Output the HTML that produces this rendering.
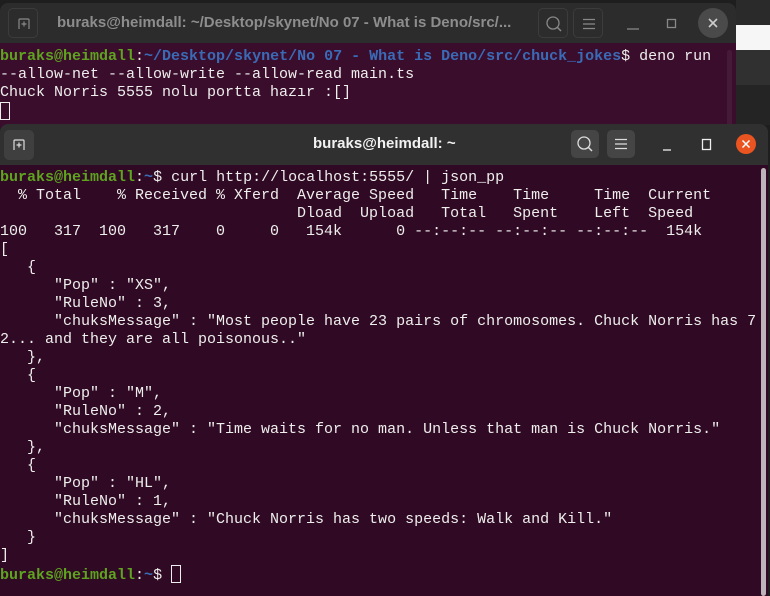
<!DOCTYPE html>
<html><head><meta charset="utf-8"><style>
*{margin:0;padding:0;box-sizing:border-box}
body{width:770px;height:596px;overflow:hidden;background:#1e1e1e;position:relative;font-family:"Liberation Sans",sans-serif}
.bg1{position:absolute;left:736px;top:0;width:34px;height:25px;background:#2a2a2a}
.bg2{position:absolute;left:736px;top:25px;width:34px;height:25px;background:#f6f6f6}
.bg3{position:absolute;left:736px;top:50px;width:34px;height:35px;background:#303030}
.bg4{position:absolute;left:736px;top:85px;width:34px;height:40px;background:#242424}
.win{position:absolute;overflow:hidden;border-radius:8px 8px 0 0}
.tb{position:absolute;left:0;right:0;top:0;height:40px}
.btn{position:absolute;top:5px;width:30px;height:30px;border-radius:5px}
.term{position:absolute;left:0;right:0;font-family:"Liberation Mono",monospace;font-size:15px;line-height:18px;white-space:pre;color:#eeeeec}
.g{color:#5ea41f;font-weight:bold}
.b{color:#3a6bb6;font-weight:bold}
.cur{display:inline-block;width:10px;height:18px;border:1.5px solid #eee;vertical-align:-4px}
.title{position:absolute;top:0;height:40px;line-height:40px;font-size:15px;font-weight:bold}
</style></head><body>
<div class="bg1"></div><div class="bg2"></div><div class="bg3"></div><div class="bg4"></div>

<div class="win" style="left:0;top:3px;width:736px;height:125px;background:#3a0d2d">
 <div class="tb" style="background:#2c2c2c;height:40px">
  <div class="btn" style="left:8px;border:1px solid #3c3c3c"><svg width="30" height="30"><path d="M10 20V11Q10 10 11 10H19Q20 10 20 11V20M15 12.5V17.5M12.5 15H17.5" stroke="#888" stroke-width="1.2" fill="none"/></svg></div>
  <div class="title" style="left:57px;color:#8d8d8d">buraks@heimdall: ~/Desktop/skynet/No 07 - What is Deno/src/...</div>
  <div class="btn" style="left:538px;border:1px solid #3c3c3c"><svg width="30" height="30"><circle cx="14" cy="14" r="6" stroke="#888" stroke-width="1.3" fill="none"/><path d="M18.5 18.5L22 22" stroke="#888" stroke-width="1.5"/></svg></div>
  <div class="btn" style="left:573px;border:1px solid #3c3c3c"><svg width="30" height="30"><path d="M9 10.5H21M9 15H21M9 19.5H21" stroke="#888" stroke-width="1.2"/></svg></div>
  <svg style="position:absolute;left:626px;top:15px" width="14" height="14"><path d="M1 11H13" stroke="#888" stroke-width="1.3"/></svg>
  <svg style="position:absolute;left:665px;top:15px" width="16" height="14"><rect x="2.5" y="1.5" width="8" height="8" stroke="#888" stroke-width="1.3" fill="none"/></svg>
  <div style="position:absolute;left:698px;top:5px;width:30px;height:30px;border-radius:50%;background:#4a4a4a"><svg width="30" height="30"><path d="M11 11L19 19M19 11L11 19" stroke="#ccc" stroke-width="1.6"/></svg></div>
 </div>
 <div style="position:absolute;left:727px;top:47px;width:5px;height:78px;background:#451a38;border-radius:3px"></div>
 <div class="term" style="top:45px"><span class="g">buraks@heimdall</span>:<span class="b">~/Desktop/skynet/No 07 - What is Deno/src/chuck_jokes</span>$ deno run
--allow-net --allow-write --allow-read main.ts
Chuck Norris 5555 nolu portta hazır :[]
<span class="cur"></span></div>
</div>

<div class="win" style="left:0;top:124px;width:768px;height:472px;background:#300a24">
 <div class="tb" style="background:#303030;height:41px">
  <div class="btn" style="left:4px;top:6px;background:#3f3f3f"><svg width="30" height="30"><path d="M10 20V11Q10 10 11 10H19Q20 10 20 11V20M15 12.5V17.5M12.5 15H17.5" stroke="#ddd" stroke-width="1.2" fill="none"/></svg></div>
  <div class="title" style="left:313px;color:#f2f2f2">buraks@heimdall: ~</div>
  <div class="btn" style="left:571px;top:6px;width:28px;height:28px;background:#454545"><svg width="28" height="28"><circle cx="13" cy="13" r="6" stroke="#ddd" stroke-width="1.3" fill="none"/><path d="M17.5 17.5L21 21" stroke="#ddd" stroke-width="1.5"/></svg></div>
  <div class="btn" style="left:607px;top:6px;width:28px;height:28px;background:#454545"><svg width="28" height="28"><path d="M8 9.5H20M8 14H20M8 18.5H20" stroke="#ddd" stroke-width="1.2"/></svg></div>
  <svg style="position:absolute;left:662px;top:14px" width="16" height="14"><path d="M1 12H9" stroke="#eee" stroke-width="1.3"/></svg>
  <svg style="position:absolute;left:700px;top:14px" width="16" height="14"><rect x="2.5" y="1.5" width="8" height="10" stroke="#eee" stroke-width="1.3" fill="none"/></svg>
  <div style="position:absolute;left:736px;top:10px;width:20px;height:20px;border-radius:50%;background:#e95420"><svg width="20" height="20"><path d="M6.5 6.5L13.5 13.5M13.5 6.5L6.5 13.5" stroke="#fff" stroke-width="1.5"/></svg></div>
 </div>
 <div style="position:absolute;left:761px;top:44px;width:5px;height:428px;background:#bcb4b8;border-radius:3px"></div>
 <div class="term" style="top:45px"><span class="g">buraks@heimdall</span>:<span class="b">~</span>$ curl http://localhost:5555/ | json_pp
  % Total    % Received % Xferd  Average Speed   Time    Time     Time  Current
                                 Dload  Upload   Total   Spent    Left  Speed
100   317  100   317    0     0   154k      0 --:--:-- --:--:-- --:--:--  154k
[
   {
      "Pop" : "XS",
      "RuleNo" : 3,
      "chuksMessage" : "Most people have 23 pairs of chromosomes. Chuck Norris has 7
2... and they are all poisonous.."
   },
   {
      "Pop" : "M",
      "RuleNo" : 2,
      "chuksMessage" : "Time waits for no man. Unless that man is Chuck Norris."
   },
   {
      "Pop" : "HL",
      "RuleNo" : 1,
      "chuksMessage" : "Chuck Norris has two speeds: Walk and Kill."
   }
]
<span class="g">buraks@heimdall</span>:<span class="b">~</span>$ <span class="cur"></span></div>
</div>
</body></html>
